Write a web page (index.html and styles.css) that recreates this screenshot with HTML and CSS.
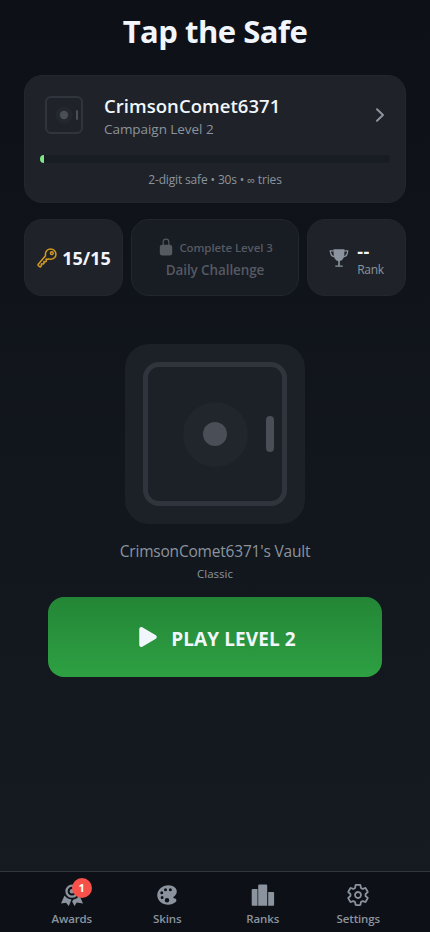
FILE: index.html
```html
<!DOCTYPE html>
<html lang="en">
<head>
<meta charset="utf-8">
<meta name="viewport" content="width=device-width, initial-scale=1">
<title>Tap the Safe</title>
<link rel="stylesheet" href="styles.css">
</head>
<body>
<div class="app">
  <main class="main">
    <h1 class="title"><span>Tap the Safe</span></h1>

    <section class="card profile">
      <div class="profile-row">
        <svg class="mini-safe" viewBox="0 0 40 40">
          <rect x="2" y="2" width="36" height="36" rx="5" fill="none" stroke="#30353d" stroke-width="2"/>
          <circle cx="20" cy="20" r="8.6" fill="#23272e"/>
          <circle cx="20" cy="20" r="4.2" fill="#494e57"/>
          <rect x="32" y="15" width="2" height="10" rx="1" fill="#494e57"/>
        </svg>
        <div class="who">
          <div class="name">CrimsonComet6371</div>
          <div class="level">Campaign Level 2</div>
        </div>
        <svg class="chevron" viewBox="0 0 20 20"><path d="M7 4.2l6 5.8-6 5.8" fill="none" stroke="#8b949e" stroke-width="2" stroke-linecap="round" stroke-linejoin="round"/></svg>
      </div>
      <div class="track"><div class="fill"></div></div>
      <div class="rules">2-digit safe • 30s • <span class="infinity">∞</span> tries</div>
    </section>

    <section class="stats">
      <div class="card keys">
        <svg class="key-icon" viewBox="0 0 512 512"><path d="M218.1 167.17c0 13 0 25.6 4.1 37.4-43.1 50.6-156.9 184.3-167.5 194.5a20.17 20.17 0 00-6.7 15c0 8.5 5.2 16.7 9.6 21.3 6.6 6.9 34.8 33 40 28 15.4-15 18.5-19 24.8-25.2 9.5-9.3-1-28.3 2.3-36s6.8-9.2 12.5-10.4 15.8 2.9 23.7 3c8.3.1 12.8-3.4 19-9.2 5-4.6 8.6-8.9 8.7-15.6.2-9-12.8-20.9-3.1-30.4s23.7 6.2 34 5 22.8-15.5 24.1-21.6-11.7-21.8-9.7-30.7c.7-3 6.8-10 11.4-11s25 6.9 29.6 5.9c5.6-1.2 12.1-7.1 17.4-10.4 15.5 6.7 29.6 9.4 47.7 9.4 68.5 0 124-53.4 124-119.2S408.5 48 340 48s-121.9 53.37-121.9 119.17zM400 144a32 32 0 11-32-32 32 32 0 0132 32z" fill="none" stroke="#d29922" stroke-width="36" stroke-linejoin="round"/></svg>
        <span class="key-count">15/15</span>
      </div>
      <div class="card daily">
        <div class="daily-top">
          <svg class="lock-icon" viewBox="0 0 512 512"><path fill="#555a62" d="M368 192h-16v-80a96 96 0 10-192 0v80h-16a64.07 64.07 0 00-64 64v176a64.07 64.07 0 0064 64h224a64.07 64.07 0 0064-64V256a64.07 64.07 0 00-64-64zm-48 0H192v-80a64 64 0 11128 0z"/></svg>
          <span class="daily-req">Complete Level 3</span>
        </div>
        <div class="daily-name">Daily Challenge</div>
      </div>
      <div class="card rank">
        <svg class="trophy-icon" viewBox="0 0 20 20">
          <path d="M4.500 1.300h11l-.2 5.600c-.2 3.200-2 5.600-4.500 6.200v4.400h2.900v1.300H6.300v-1.300h2.900v-4.400C6.700 12.500 4.900 10.100 4.700 6.900z" fill="#8b949e"/>
          <path d="M4.800 2.900H1.300c.2 3.500 1.500 5.600 4.300 5.900M15.200 2.900h3.500c-.2 3.500-1.500 5.600-4.300 5.900" fill="none" stroke="#8b949e" stroke-width="1.300"/>
        </svg>
        <div class="rank-text">
          <div class="rank-value">--</div>
          <div class="rank-label">Rank</div>
        </div>
      </div>
    </section>

    <section class="vault">
      <svg class="safe" viewBox="0 0 180 180">
        <rect width="180" height="180" rx="24" fill="#1c2027"/>
        <rect x="20.500" y="20.500" width="139" height="139" rx="13.500" fill="none" stroke="#30353d" stroke-width="5"/>
        <circle cx="90.500" cy="90.500" r="32.500" fill="#21252c"/>
        <circle cx="90" cy="90" r="12" fill="#494e57"/>
        <rect x="141" y="72" width="8" height="36" rx="4" fill="#494e57"/>
      </svg>
      <div class="vault-name">CrimsonComet6371's Vault</div>
      <div class="vault-skin">Classic</div>
    </section>

    <button class="play" type="button">
      <svg class="play-icon" viewBox="0 0 512 512"><path fill="#f0f6fc" d="M133 440a35.370 35.370 0 01-17.500-4.670c-12-6.800-19.460-20-19.460-34.330V111c0-14.370 7.460-27.530 19.460-34.330a35.130 35.130 0 0135.770.450l247.850 148.360a36 36 0 010 61l-247.890 148.400A35.500 35.500 0 01133 440z"/></svg>
      <span>PLAY LEVEL 2</span>
    </button>
  </main>

  <nav class="tabs">
    <a class="tab">
      <span class="tab-icon">
        <svg viewBox="0 0 24 24">
          <circle cx="12" cy="8.200" r="5.500" fill="none" stroke="#8b949e" stroke-width="2.300"/>
          <circle cx="12" cy="8.200" r="2.300" fill="#8b949e"/>
          <path d="M4.500 12.500c1.600 2.200 3.800 3.600 7 4L8.800 23 6 19.800 1 20.400zM19.500 12.500c-1.600 2.200-3.500 3.600-6 4l-1.400 2 2.400 4.500 2.200-3.400 6.300.8z" fill="#8b949e"/>
        </svg>
        <span class="badge">1</span>
      </span>
      <span class="tab-label">Awards</span>
    </a>
    <a class="tab">
      <span class="tab-icon">
        <svg viewBox="0 0 512 512"><path fill="#8b949e" d="M441 336.200l-.060-.050c-9.930-9.180-22.780-11.340-32.160-12.920l-.690-.120c-9.050-1.490-10.480-2.500-14.580-6.170-2.440-2.170-5.350-5.650-5.350-9.940s2.910-7.770 5.340-9.940l30.280-26.870c25.920-22.910 40.200-53.660 40.200-86.590s-14.250-63.680-40.200-86.600c-35.890-31.590-85-49-138.370-49C223.720 48 162 71.370 116 112.110c-43.870 38.770-68 90.710-68 146.240s24.160 107.470 68 146.230c21.750 19.240 47.490 34.180 76.520 44.420a266.170 266.170 0 0086.870 15h1.810c61 0 119.090-20.570 159.390-56.400 9.700-8.560 15.150-20.830 15.340-34.560.210-14.170-5.370-27.950-14.930-36.840zM112 208a32 32 0 1132 32 32 32 0 01-32-32zm40 135a32 32 0 1132-32 32 32 0 01-32 32zm40-199a32 32 0 1132 32 32 32 0 01-32-32zm64 271a48 48 0 1148-48 48 48 0 01-48 48zm72-239a32 32 0 1132-32 32 32 0 01-32 32z"/></svg>
      </span>
      <span class="tab-label">Skins</span>
    </a>
    <a class="tab">
      <span class="tab-icon">
        <svg viewBox="0 0 24 24" fill="#8b949e">
          <path d="M1.700 5.900h4.800v16.800H1.700a1 1 0 01-1-1V6.900a1 1 0 011-1z"/>
          <path d="M8.200 1.400h7a1 1 0 011 1v20.300h-9V2.400a1 1 0 011-1z"/>
          <path d="M17.200 8.900h4.900a1 1 0 011 1v11.800a1 1 0 01-1 1h-4.900z"/>
        </svg>
      </span>
      <span class="tab-label">Ranks</span>
    </a>
    <a class="tab">
      <span class="tab-icon">
        <svg viewBox="0 0 512 512"><path fill="none" stroke="#8b949e" stroke-width="38" stroke-linecap="round" stroke-linejoin="round" d="M262.290 192.310a64 64 0 1057.400 57.400 64.130 64.130 0 00-57.400-57.400zM416.390 256a154.340 154.340 0 01-1.530 20.790l45.210 35.460a10.810 10.810 0 012.450 13.750l-42.770 74a10.810 10.810 0 01-13.140 4.590l-44.900-18.080a16.110 16.110 0 00-15.170 1.750A164.480 164.480 0 01325 400.800a15.940 15.940 0 00-8.820 12.140l-6.730 47.890a11.080 11.080 0 01-10.680 9.170h-85.540a11.110 11.110 0 01-10.690-8.870l-6.720-47.820a16.070 16.070 0 00-9-12.220 155.300 155.300 0 01-21.460-12.570 16 16 0 00-15.110-1.710l-44.890 18.070a10.810 10.810 0 01-13.140-4.580l-42.770-74a10.800 10.800 0 012.450-13.750l38.210-30a16.050 16.050 0 006-14.080c-.360-4.170-.580-8.330-.580-12.500s.210-8.270.580-12.350a16 16 0 00-6.070-13.940l-38.190-30A10.810 10.810 0 0149.480 186l42.770-74a10.810 10.810 0 0113.140-4.590l44.900 18.080a16.110 16.110 0 0015.170-1.750A164.480 164.480 0 01187 111.200a15.940 15.940 0 008.820-12.140l6.730-47.890A11.080 11.080 0 01213.230 42h85.540a11.110 11.110 0 0110.690 8.870l6.720 47.820a16.070 16.070 0 009 12.220 155.300 155.300 0 0121.460 12.570 16 16 0 0015.110 1.710l44.890-18.070a10.810 10.810 0 0113.140 4.580l42.770 74a10.800 10.800 0 01-2.450 13.750l-38.210 30a16.050 16.050 0 00-6.050 14.080c.330 4.140.550 8.300.550 12.470z"/></svg>
      </span>
      <span class="tab-label">Settings</span>
    </a>
  </nav>
</div>
</body>
</html>
```
FILE: styles.css
```css
* { box-sizing: border-box; }
body { margin: 0; background: #0d1117; }
.app {
  height: 932px;
  display: flex;
  flex-direction: column;
  overflow: hidden;
  background: linear-gradient(#0d1117, #161b22);
  font-family: "Open Sans", "Noto Sans", sans-serif;
  color: #f0f6fc;
  white-space: nowrap;
}
.main { flex: 1; padding: 10px 24px 0; }
.title {
  margin: 0;
  height: 65px;
  line-height: 42px;
  font-size: 31px;
  font-weight: 700;
  letter-spacing: -0.5px;
  text-align: center;
}
.card {
  background: #1f2329;
  border: 1px solid #22262d;
  border-radius: 18px;
}
.profile { height: 128px; padding: 19px 15px 0; }
.profile-row { display: flex; align-items: center; height: 40px; padding-left: 4px; }
.mini-safe { width: 40px; height: 40px; flex: none; }
.who { flex: 1; padding: 6px 0 0 20px; }
.name { font-size: 18.5px; font-weight: 600; line-height: 23px; letter-spacing: 0.05px; }
.level { font-size: 13.5px; line-height: 25px; letter-spacing: -0.05px; color: #8b949e; }
.chevron { width: 20px; height: 20px; }
.track {
  height: 8px;
  margin-top: 20px;
  border-radius: 4px;
  background: #181c23;
  overflow: hidden;
}
.fill { width: 4px; height: 8px; background: #7ee787; }
.rules {
  margin-top: 8px;
  font-size: 12px;
  line-height: 18px;
  letter-spacing: -0.15px;
  text-align: center;
  color: #8b949e;
}
.infinity { font-family: "Noto Sans", sans-serif; font-size: 11px; line-height: 1; }
.stats { display: flex; gap: 8px; margin-top: 16px; height: 77px; }
.keys, .rank { width: 99px; display: flex; align-items: center; justify-content: center; }
.daily { flex: 1; background: #181c23; border-color: #22272e; padding-top: 16px; color: #555a62; text-align: center; }
.key-icon { width: 22px; height: 22px; margin-right: 4px; }
.key-count { font-size: 18px; font-weight: 700; }
.daily-top { display: flex; justify-content: center; align-items: center; height: 22px; gap: 4px; }
.lock-icon { width: 18px; height: 18px; }
.daily-req { font-size: 11.5px; font-weight: 600; letter-spacing: -0.1px; }
.daily-name { font-size: 13.5px; font-weight: 600; line-height: 24px; letter-spacing: -0.1px; }
.trophy-icon { width: 20px; height: 20px; margin-right: 8px; }
.rank-text { padding-top: 4px; }
.rank-value { font-size: 18px; font-weight: 700; line-height: 20px; letter-spacing: 0.5px; }
.rank-label { font-size: 12px; line-height: 17px; letter-spacing: -0.3px; color: #8b949e; }
.vault { margin-top: 48px; text-align: center; color: #8b949e; }
.safe { display: block; width: 180px; height: 180px; margin: 0 auto; }
.vault-name { margin-top: 16px; font-size: 15.5px; line-height: 23px; letter-spacing: -0.2px; }
.vault-skin { font-size: 11.5px; line-height: 22px; margin-bottom: -2px; }
.play {
  display: flex;
  align-items: center;
  justify-content: center;
  gap: 9px;
  width: 334px;
  height: 80px;
  margin: 14px auto 0;
  padding: 4px 0 0;
  border: 0;
  border-radius: 16px;
  background: linear-gradient(#238636, #2ea043);
  color: #f0f6fc;
  font: 700 19px "Open Sans", "Noto Sans", sans-serif;
  letter-spacing: 0.1px;
}
.play-icon { width: 28px; height: 28px; margin-bottom: 4px; }
.tabs {
  display: grid;
  grid-template-columns: repeat(4, 1fr);
  height: 61px;
  padding: 11px 24px 0;
  border-top: 1px solid #30363d;
  background: #0d1117;
}
.tab { display: flex; flex-direction: column; align-items: center; color: #8b949e; }
.tab-icon { position: relative; width: 24px; height: 24px; }
.tab-icon svg { display: block; width: 24px; height: 24px; }
.tab-label { font-size: 11.5px; font-weight: 600; line-height: 24px; letter-spacing: -0.15px; }
.badge {
  position: absolute;
  top: -5px;
  left: 12px;
  width: 20px;
  height: 20px;
  border-radius: 50%;
  background: #f85149;
  color: #fff;
  font-size: 11px;
  font-weight: 700;
  line-height: 20px;
  text-align: center;
}
```
